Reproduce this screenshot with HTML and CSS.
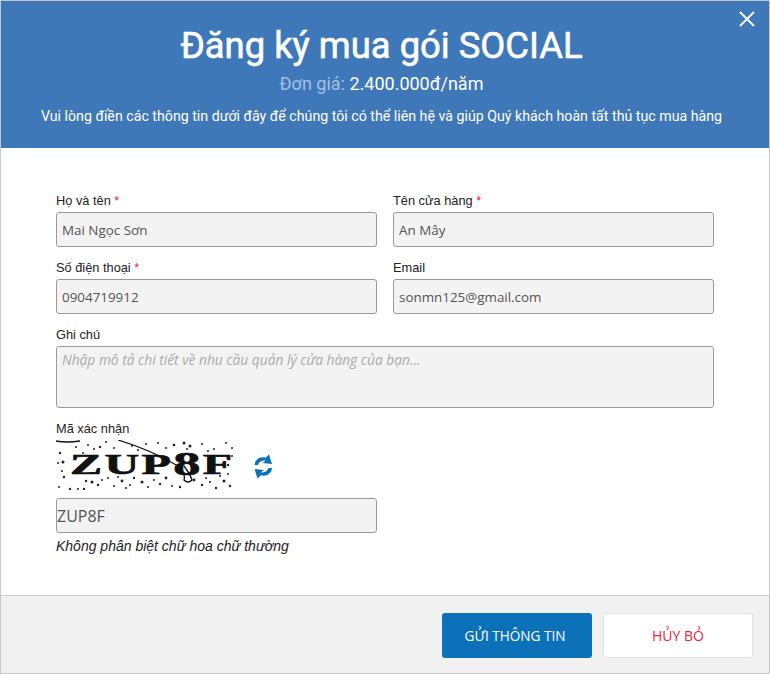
FILE: index.html
```html
<!DOCTYPE html>
<html lang="vi">
<head>
<meta charset="utf-8">
<title>Đăng ký mua gói SOCIAL</title>
<link rel="stylesheet" href="styles.css">
</head>
<body>
<div class="modal">
  <header class="head">
    <h1 class="title">Đăng ký mua gói SOCIAL</h1>
    <p class="price"><span class="price-label">Đơn giá:</span> 2.400.000đ/năm</p>
    <p class="intro">Vui lòng điền các thông tin dưới đây để chúng tôi có thể liên hệ và giúp Quý khách hoàn tất thủ tục mua hàng</p>
    <svg class="close" width="16" height="16" viewBox="0 0 16 16"><path d="M1 1L15 15M15 1L1 15" stroke="#fff" stroke-width="1.8" fill="none"/></svg>
  </header>
  <main class="body">
    <div class="grid">
      <div class="field"><label class="label">Họ và tên <span class="req">*</span></label><div class="input">Mai Ngọc Sơn</div></div>
      <div class="field"><label class="label">Tên cửa hàng <span class="req">*</span></label><div class="input">An Mây</div></div>
      <div class="field"><label class="label">Số điện thoại <span class="req">*</span></label><div class="input">0904719912</div></div>
      <div class="field"><label class="label">Email</label><div class="input">sonmn125@gmail.com</div></div>
      <div class="field wide"><label class="label">Ghi chú</label><div class="input area">Nhập mô tả chi tiết về nhu cầu quản lý cửa hàng của bạn...</div></div>
    </div>
    <div class="captcha-block">
      <label class="label">Mã xác nhận</label>
      <div class="captcha-row">
        <svg class="captcha" width="180" height="50" viewBox="0 0 180 50">
          <text class="cap-text" transform="translate(14 34) scale(1.6 1)">ZUP<tspan class="cap-big" dy="1">8</tspan><tspan dy="-1">F</tspan></text>
          <path d="M0 1Q10 3 24 1M62 0Q95 10 122 26Q130 34 128 40Q132 44 136 40Q134 34 128 26" stroke="#111" stroke-width="1.3" fill="none"/>
          <g fill="#222">
            <circle cx="4" cy="13" r="1.2"/><circle cx="7" cy="22" r="1.5"/><circle cx="2" cy="23" r="1"/><circle cx="6" cy="31" r="1"/><circle cx="8" cy="37" r="1.2"/><circle cx="3" cy="47" r="1"/><circle cx="14" cy="49" r="1.2"/><circle cx="22" cy="49" r="1"/><circle cx="28" cy="49" r="1.2"/>
            <circle cx="20" cy="7" r="1"/><circle cx="32" cy="5" r="1"/><circle cx="44" cy="7" r="1.2"/><circle cx="27" cy="13" r="1"/><circle cx="38" cy="9" r="1"/>
            <circle cx="30" cy="41" r="1.2"/><circle cx="36" cy="42" r="1.5"/><circle cx="42" cy="45" r="1.2"/><circle cx="46" cy="40" r="1"/><circle cx="52" cy="38" r="1"/><circle cx="58" cy="46" r="1"/><circle cx="66" cy="41" r="1.4"/><circle cx="62" cy="37" r="1"/><circle cx="74" cy="45" r="1"/><circle cx="78" cy="38" r="1.2"/><circle cx="70" cy="48" r="1"/><circle cx="86" cy="42" r="1.5"/><circle cx="92" cy="47" r="1"/><circle cx="98" cy="40" r="1"/><circle cx="104" cy="44" r="1.2"/><circle cx="110" cy="38" r="1.4"/><circle cx="116" cy="46" r="1"/><circle cx="124" cy="47" r="1.2"/><circle cx="138" cy="40" r="1.4"/><circle cx="146" cy="45" r="1.2"/><circle cx="154" cy="42" r="1"/><circle cx="160" cy="48" r="1.2"/><circle cx="168" cy="41" r="1.5"/><circle cx="174" cy="46" r="1.2"/><circle cx="164" cy="36" r="1"/><circle cx="172" cy="34" r="1"/><circle cx="150" cy="38" r="1"/>
            <circle cx="172" cy="25" r="1.2"/><circle cx="176" cy="16" r="1"/><circle cx="170" cy="3" r="1"/><circle cx="176" cy="8" r="1"/><circle cx="128" cy="3" r="1.5"/><circle cx="134" cy="6" r="1.5"/><circle cx="131" cy="9" r="1"/><circle cx="146" cy="4" r="1"/><circle cx="102" cy="3" r="1"/><circle cx="118" cy="5" r="1.3"/><circle cx="110" cy="8" r="1"/><circle cx="90" cy="4" r="1"/><circle cx="76" cy="6" r="1"/><circle cx="82" cy="10" r="1"/><circle cx="58" cy="8" r="1"/><circle cx="158" cy="9" r="1"/><circle cx="50" cy="2" r="1"/><circle cx="152" cy="11" r="1"/>
          </g>
        </svg>
        <svg class="refresh" width="19" height="27" viewBox="0 0 19 27"><path d="M0.500 12C1 6.500 6 3 11.500 4.700L15 1.500L18 11L8.500 10L11.500 7.800C8 7 5 9 4 12Z" fill="#0b72b9"/><path d="M18 15C17.500 20.500 12.500 24 7 22.300L3.500 25.500L0.500 16L10 17L7 19.200C10.500 20 13.500 18 14.500 15Z" fill="#0b72b9"/></svg>
      </div>
      <div class="input captcha-input">ZUP8F</div>
      <p class="hint">Không phân biệt chữ hoa chữ thường</p>
    </div>
  </main>
  <footer class="foot">
    <button class="btn send">GỬI THÔNG TIN</button>
    <button class="btn cancel">HỦY BỎ</button>
  </footer>
</div>
</body>
</html>
```
FILE: styles.css
```css
* { box-sizing: border-box; }
html, body { margin: 0; padding: 0; }
body { background: #fff; font-family: "Liberation Sans", Arial, sans-serif; }
.modal { width: 770px; height: 674px; border: 1px solid #c8c8c8; display: flex; flex-direction: column; background: #fff; }
.head { position: relative; height: 147px; background: #3f78b9; color: #fff; text-align: center; font-family: Roboto, sans-serif; padding: 22px 7px 0 0; flex: none; }
.title { margin: 0; font-size: 36.4px; line-height: 46px; font-weight: 400; -webkit-text-stroke: 0.6px #fff; }
.price { margin: 3px 0 0; font-size: 18px; line-height: 24px; }
.price-label { color: #a3c0e2; }
.intro { margin: 10px 0 0; font-size: 14.2px; line-height: 20px; }
.close { position: absolute; top: 10px; right: 14px; }
.body { flex: 1; padding: 46px 55px 0; }
.grid { display: grid; grid-template-columns: 321px 321px; column-gap: 16px; row-gap: 14px; }
.wide { grid-column: 1 / 3; }
.label { display: block; font-size: 12.8px; line-height: 14px; color: #222; margin-bottom: 4px; }
.req { color: #e8203a; }
.input { height: 35px; border: 1px solid #999; border-radius: 3px; background: #f3f3f3; color: #555; font-family: "Open Sans", sans-serif; font-size: 13.4px; line-height: 34px; padding: 0 5px; }
.area { height: 62px; font-size: 13.75px; font-style: italic; color: #aaa; line-height: 26px; }
.captcha-block { margin-top: 14px; }
.captcha-block .label { margin-bottom: 4px; }
.captcha-row { display: flex; align-items: center; gap: 18px; }
.captcha { display: block; }
.cap-text { font-family: "Liberation Serif", serif; font-weight: 700; font-size: 30px; letter-spacing: 1.5px; fill: #111; stroke: #111; stroke-width: 0.7px; }
.cap-big { font-size: 34px; }
.refresh { display: block; margin-top: 2px; }
.captcha-input { width: 321px; margin-top: 8px; padding: 0; font-size: 16px; }
.hint { margin: 4px 0 0; font-size: 14px; line-height: 18px; font-style: italic; color: #222; }
.foot { flex: none; height: 78px; background: #f1f1f1; border-top: 1px solid #ccc; display: flex; justify-content: flex-end; align-items: flex-start; gap: 11px; padding: 17px 16px 0 0; }
.btn { width: 150px; height: 45px; border-radius: 3px; font-family: "Open Sans", sans-serif; font-size: 13.6px; cursor: pointer; }
.send { background: #0b72b9; color: #fff; border: 0; padding: 0 10px 0 6px; }
.cancel { background: #fff; color: #f01f3a; border: 1px solid #e2e2e2; font-size: 14px; }
```
